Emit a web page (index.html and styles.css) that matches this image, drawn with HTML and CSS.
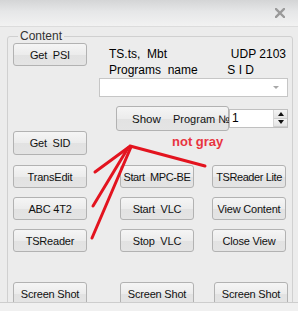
FILE: index.html
```html
<!DOCTYPE html>
<html lang="en">
<head>
    <meta charset="UTF-8">
    <title>Content</title>
    <link rel="stylesheet" href="styles.css">
</head>
<body>
    <div class="window">
        <div class="titlebar">
            <svg class="close" width="10" height="10" viewBox="0 0 10 10">
                <path d="M1 1 L9 9 M9 1 L1 9" stroke="#9a9a9a" stroke-width="2.4" stroke-linecap="square"/>
            </svg>
        </div>
        <div class="client">
            <fieldset class="group">
                <legend>Content</legend>
                <div class="head">
                    <button class="btn">Get  PSI</button>
                    <div class="info">
                        <div class="line"><span>TS.ts,  Mbt</span><span>UDP 2103</span></div>
                        <div class="line"><span>Programs  name</span><span class="sid">S I D</span></div>
                    </div>
                </div>
                <div class="combo"><span class="arrow"></span></div>
                <div class="show-row">
                    <button class="btn show"><span class="show-word">Show</span><span class="prog-word">Program №</span></button>
                    <div class="spin">
                        <span class="value">1</span>
                        <span class="spin-btns">
                            <span class="up"></span>
                            <span class="down"></span>
                        </span>
                    </div>
                </div>
                <div class="grid">
                    <button class="btn tall">Get  SID</button>
                    <span></span>
                    <span></span>
                    <button class="btn">TransEdit</button>
                    <button class="btn tight">Start  MPC-BE</button>
                    <button class="btn tight">TSReader Lite</button>
                    <button class="btn">ABC 4T2</button>
                    <button class="btn">Start  VLC</button>
                    <button class="btn">View Content</button>
                    <button class="btn">TSReader</button>
                    <button class="btn">Stop  VLC</button>
                    <button class="btn">Close View</button>
                    <button class="btn">Screen Shot</button>
                    <button class="btn">Screen Shot</button>
                    <button class="btn shift">Screen Shot</button>
                </div>
            </fieldset>
        </div>
        <div class="note">
            <svg width="298" height="311" viewBox="0 0 298 311">
                <g stroke="#e3141f" stroke-width="3" stroke-linecap="round" fill="none">
                    <path d="M130 146 L205 166"/>
                    <path d="M95 172 L129 147"/>
                    <path d="M93 206 L128 148"/>
                    <path d="M92 238 L131 147"/>
                </g>
            </svg>
            <span class="note-text">not gray</span>
        </div>
    </div>
</body>
</html>
```

FILE: styles.css
```css
body {
    margin: 0;
    background-color: #ededed;
    font-family: 'Liberation Sans', Arial, sans-serif;
    font-size: 12px;
    color: #000;
}
.window {
    position: relative;
    width: 298px;
    height: 311px;
    background-color: #f0f0f0;
    overflow: hidden;
}
.titlebar {
    height: 26px;
    border-bottom: 1px solid #dcdcdc;
    background: linear-gradient(#d4d5d6, #e6e7e8 45%, #f2f2f2);
    display: flex;
    justify-content: flex-end;
    align-items: flex-start;
}
.close {
    margin: 8px 13px 0 0;
}
.client {
    height: 275px;
    padding: 0 5px 0 7px;
    border-bottom: 1px solid #cdcdcd;
    background-color: #ececec;
    overflow: hidden;
}
.group {
    margin: 3px 0 0 0;
    padding: 1px 4px 0 5px;
    height: 300px;
    border: 1px solid #d0d0d0;
    border-radius: 3px;
    box-sizing: border-box;
}
.group legend {
    margin-left: 5px;
    padding: 0 2px;
    line-height: 12px;
    color: #333;
}
.head {
    display: flex;
    height: 35px;
}
.btn {
    width: 74px;
    height: 23px;
    padding: 0;
    border: 1px solid #b2b2b2;
    border-radius: 3px;
    background: linear-gradient(#f5f5f5, #ececec 50%, #e2e2e2 51%, #e4e4e4);
    font-family: 'Liberation Sans', Arial, sans-serif;
    font-size: 11px;
    letter-spacing: -0.2px;
    color: #111;
    white-space: pre;
    box-sizing: border-box;
}
.btn.tight {
    letter-spacing: -0.4px;
}
.info {
    margin-left: 22px;
    width: 177px;
    padding-top: 3px;
}
.line {
    display: flex;
    justify-content: space-between;
    line-height: 16px;
    white-space: pre;
}
.sid {
    margin-right: 32px;
}
.combo {
    position: relative;
    margin-left: 86px;
    width: 189px;
    height: 19px;
    background-color: #fff;
    border: 1px solid #c6c6c6;
    box-sizing: border-box;
}
.arrow {
    position: absolute;
    right: 8px;
    top: 7px;
    border-left: 3px solid transparent;
    border-right: 3px solid transparent;
    border-top: 3px solid #a8a8a8;
}
.show-row {
    display: flex;
    align-items: flex-start;
    margin: 9px 0 0 103px;
    height: 25px;
}
.btn.show {
    display: flex;
    align-items: center;
    justify-content: flex-start;
    flex: 0 0 113px;
    height: 25px;
    padding-left: 15px;
    font-size: 11.5px;
    letter-spacing: 0;
    text-align: left;
    overflow: visible;
}
.show-word {
    flex: 0 0 41px;
}
.prog-word {
    flex: 0 0 auto;
    font-size: 11px;
}
.spin {
    position: relative;
    display: flex;
    justify-content: space-between;
    margin-top: 3px;
    flex: 0 0 59px;
    height: 19px;
    background-color: #fff;
    border: 1px solid #c0c0c0;
    box-sizing: border-box;
}
.value {
    padding-left: 2px;
    line-height: 17px;
}
.spin-btns {
    display: flex;
    flex-direction: column;
    width: 13px;
    border-left: 1px solid #d6d6d6;
}
.spin-btns span {
    flex: 1;
    display: flex;
    align-items: center;
    justify-content: center;
    background: linear-gradient(#f4f4f4, #e4e4e4);
    border-bottom: 1px solid #cfcfcf;
}
.up::before {
    content: '';
    border-left: 3px solid transparent;
    border-right: 3px solid transparent;
    border-bottom: 4px solid #111;
}
.down::before {
    content: '';
    border-left: 3px solid transparent;
    border-right: 3px solid transparent;
    border-top: 4px solid #111;
}
.grid {
    display: grid;
    grid-template-columns: 107px 92px 74px;
    grid-template-rows: 34px 32px 32px 53px 23px;
    align-items: start;
}
.btn.tall {
    height: 24px;
}
.btn.shift {
    margin-left: 2px;
}
.note {
    position: absolute;
    top: 0;
    left: 0;
    width: 298px;
    height: 311px;
    pointer-events: none;
}
.note svg {
    display: block;
}
.note-text {
    position: absolute;
    left: 172px;
    top: 134px;
    font-weight: bold;
    font-size: 13px;
    color: #e8343f;
}
```
